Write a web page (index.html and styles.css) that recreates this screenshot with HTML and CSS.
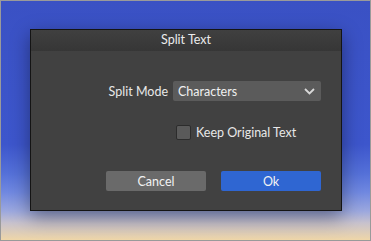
FILE: index.html
```html
<!DOCTYPE html>
<html>
  <head>
    <title>Split Text</title>
    <meta charset="UTF-8" />
    <link rel="stylesheet" href="styles.css">
  </head>

  <body>
    <div class="desktop">
      <div class="dialog">
        <div class="title">Split Text</div>
        <div class="content">
          <div class="row mode">
            <span class="label">Split Mode</span>
            <div class="select">
              <span>Characters</span>
              <svg width="11" height="7" viewBox="0 0 11 7">
                <path d="M1 1 L5.5 5.5 L10 1" fill="none" stroke="#d8d8d8" stroke-width="1.8" />
              </svg>
            </div>
          </div>
          <div class="row keep">
            <span class="check"></span>
            <span class="label">Keep Original Text</span>
          </div>
          <div class="row actions">
            <button class="btn cancel">Cancel</button>
            <button class="btn ok">Ok</button>
          </div>
        </div>
      </div>
    </div>
  </body>
</html>
```

FILE: styles.css
```css
* {
  box-sizing: border-box;
  margin: 0;
  padding: 0;
}

body {
  width: 371px;
  height: 241px;
  overflow: hidden;
  font-family: "Lato", "Open Sans", sans-serif;
  font-size: 12.5px;
  color: #e8e8e8;
}

.desktop {
  width: 371px;
  height: 241px;
  border: 1px solid #9a9a9a;
  padding: 28px 0 0 29px;
  background: linear-gradient(180deg, #3a51c4 0%, #3d56cc 60%, #5470d8 72%, #7088e0 80%, #9ca8de 88%, #c8c2cc 93%, #efd6a8 100%);
}

.dialog {
  width: 312px;
  height: 182px;
  border: 1px solid #141414;
  background: #414141;
  box-shadow: 0 6px 18px rgba(0, 0, 0, 0.4);
}

.title {
  height: 21px;
  line-height: 20px;
  text-align: center;
  color: #ececec;
  background: linear-gradient(180deg, #404040, #363636);
}

.row {
  display: flex;
  align-items: center;
}

.mode {
  justify-content: flex-end;
  gap: 5px;
  padding-right: 20px;
  margin-top: 30px;
}

.select {
  width: 148px;
  height: 20px;
  display: flex;
  align-items: center;
  justify-content: space-between;
  padding: 0 6px 0 5px;
  background: #5b5b5b;
  border-radius: 2px;
  color: #f0f0f0;
}

.keep {
  padding-left: 145px;
  margin-top: 24px;
  gap: 5px;
}

.check {
  width: 15px;
  height: 15px;
  background: #5a5a5a;
  border: 1px solid #2c2c2c;
  border-radius: 2px;
}

.actions {
  justify-content: flex-end;
  gap: 15px;
  padding-right: 20px;
  margin-top: 31px;
}

.btn {
  width: 100px;
  height: 20px;
  border: none;
  border-radius: 2px;
  font-family: inherit;
  font-size: 12.5px;
  color: #f2f2f2;
}

.cancel {
  background: #6a6a6a;
}

.ok {
  background: #2f66d2;
}
```
